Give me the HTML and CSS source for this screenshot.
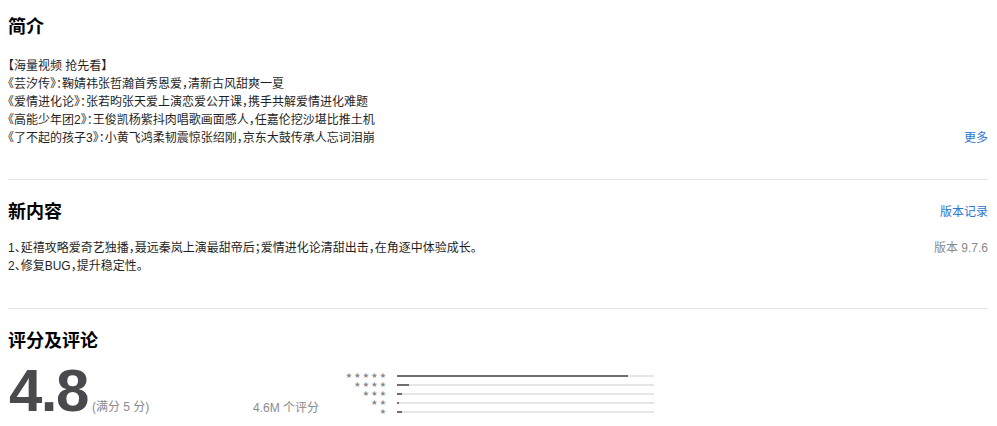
FILE: index.html
```html
<!DOCTYPE html>
<html lang="zh-CN">
<head>
<meta charset="utf-8">
<title>App 详情</title>
<link rel="stylesheet" href="styles.css">
</head>
<body>
<div class="page">
  <section class="section intro">
    <h2 class="title">简介</h2>
    <div class="desc-row">
      <div class="desc">
        <p>【海量视频 抢先看】</p>
        <p>《芸汐传》：鞠婧祎张哲瀚首秀恩爱，清新古风甜爽一夏</p>
        <p>《爱情进化论》：张若昀张天爱上演恋爱公开课，携手共解爱情进化难题</p>
        <p>《高能少年团2》：王俊凯杨紫抖肉唱歌画面感人，任嘉伦挖沙堪比推土机</p>
        <p>《了不起的孩子3》：小黄飞鸿柔韧震惊张绍刚，京东大鼓传承人忘词泪崩</p>
      </div>
      <a class="link more">更多</a>
    </div>
  </section>

  <section class="section whatsnew">
    <div class="head-row">
      <h2 class="title">新内容</h2>
      <a class="link">版本记录</a>
    </div>
    <div class="notes-row">
      <div class="notes">
        <p>1、延禧攻略爱奇艺独播，聂远秦岚上演最甜帝后；爱情进化论清甜出击，在角逐中体验成长。</p>
        <p>2、修复BUG，提升稳定性。</p>
      </div>
      <div class="version">版本 9.7.6</div>
    </div>
  </section>

  <section class="section ratings">
    <h2 class="title">评分及评论</h2>
    <div class="rating-row">
      <div class="score">
        <span class="big">4.8</span><span class="outof">(满分 5 分)</span>
      </div>
      <div class="count">4.6M 个评分</div>
      <div class="hist">
        <div class="hrow"><span class="stars">★★★★★</span><span class="track"><span class="fill" style="width:90%"></span></span></div>
        <div class="hrow"><span class="stars">★★★★</span><span class="track"><span class="fill" style="width:4.7%"></span></span></div>
        <div class="hrow"><span class="stars">★★★</span><span class="track"><span class="fill" style="width:2%"></span></span></div>
        <div class="hrow"><span class="stars">★★</span><span class="track"><span class="fill" style="width:0.6%"></span></span></div>
        <div class="hrow"><span class="stars">★</span><span class="track"><span class="fill" style="width:2%"></span></span></div>
      </div>
    </div>
  </section>
</div>
</body>
</html>
```

FILE: styles.css
```css
html, body {
  margin: 0;
  padding: 0;
  overflow: hidden;
  background: #ffffff;
}

body {
  font-family: "Liberation Sans", "Noto Sans CJK SC", sans-serif;
  font-feature-settings: "halt";
  color: #1f1f1f;
  font-size: 12px;
}

p {
  margin: 0;
}

.page {
  padding: 0 9px 0 8px;
}

.section {
  border-bottom: 1px solid #e3e3e3;
}

.title {
  margin: 0;
  font-size: 18px;
  line-height: 24px;
  font-weight: 700;
  color: #000;
}

.link {
  color: #2f74d0;
  font-size: 12px;
  line-height: 18px;
  cursor: pointer;
}

/* intro */
.intro {
  padding: 15px 0 32px;
}

.desc-row {
  display: flex;
  justify-content: space-between;
  margin-top: 18px;
}

.desc {
  line-height: 18px;
}

.more {
  align-self: flex-end;
}

/* what's new */
.whatsnew {
  padding: 20px 0 33px;
}

.head-row {
  display: flex;
  justify-content: space-between;
  align-items: center;
}

.notes-row {
  display: flex;
  justify-content: space-between;
  margin-top: 15px;
}

.notes {
  line-height: 18px;
}

.version {
  line-height: 18px;
  color: #8a8a8e;
}

/* ratings */
.ratings {
  border-bottom: none;
  padding-top: 20px;
}

.rating-row {
  display: flex;
  align-items: flex-start;
  margin-top: 8px;
}

.score {
  width: 245px;
  height: 60px;
  line-height: 60px;
  white-space: nowrap;
}

.big {
  font-size: 60px;
  font-weight: 700;
  letter-spacing: -1.5px;
  color: #4a4a4e;
  margin-left: 1px;
}

.outof {
  font-size: 12px;
  line-height: 1;
  color: #8a8a8e;
  margin-left: 4px;
}

.count {
  width: 91px;
  line-height: 16px;
  color: #8a8a8e;
  margin-top: 39px;
  white-space: nowrap;
}

.hist {
  display: flex;
  flex-direction: column;
  margin-top: 10px;
}

.hrow {
  display: flex;
  align-items: center;
  height: 9px;
}

.stars {
  width: 44px;
  text-align: right;
  font-family: "DejaVu Sans", sans-serif;
  font-size: 7.5px;
  line-height: 9px;
  letter-spacing: 1.8px;
  color: #8a8a8e;
  margin-right: 9px;
}

.track {
  display: block;
  width: 257px;
  height: 2px;
  background: #e6e6e6;
}

.fill {
  display: block;
  height: 2px;
  background: #6e6e72;
}
```
